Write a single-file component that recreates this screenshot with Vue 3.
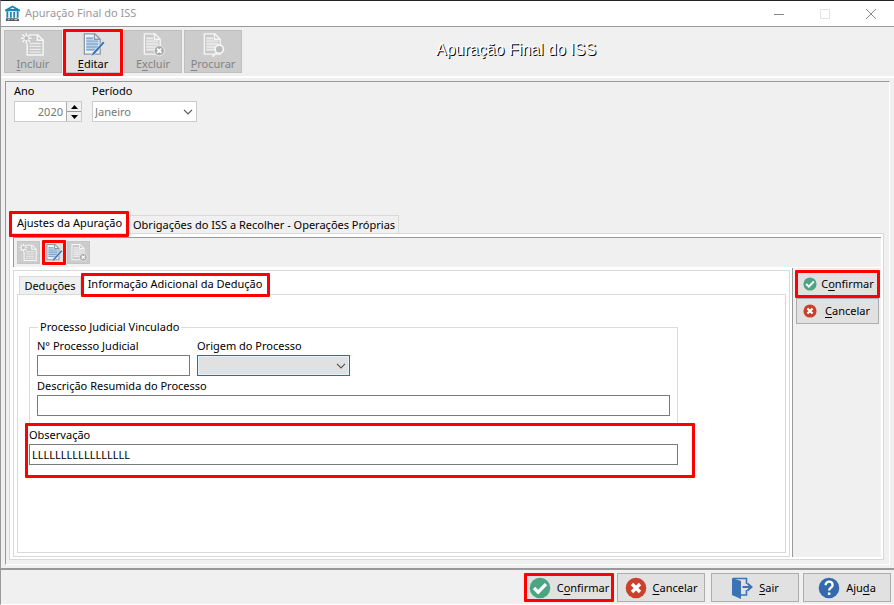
<script setup>
import { ref } from 'vue'

const tools = [
  { id: 'new', pre: '', key: 'I', post: 'ncluir', disabled: true },
  { id: 'edit', pre: '', key: 'E', post: 'ditar', disabled: false },
  { id: 'delete', pre: 'E', key: 'x', post: 'cluir', disabled: true },
  { id: 'search', pre: '', key: 'P', post: 'rocurar', disabled: true },
]
const actions = [
  { id: 'ok', pre: 'C', key: 'o', post: 'nfirmar' },
  { id: 'cancel', pre: '', key: 'C', post: 'ancelar' },
  { id: 'exit', pre: '', key: 'S', post: 'air' },
  { id: 'help', pre: 'Aju', key: 'd', post: 'a' },
]
const miniTools = [
  { id: 'new', label: 'Incluir dedução' },
  { id: 'edit', label: 'Editar dedução' },
  { id: 'delete', label: 'Excluir dedução' },
]
const year = ref(2020)
const period = ref('Janeiro')
const process = ref('')
const origin = ref('')
const summary = ref('')
const note = ref('LLLLLLLLLLLLLLLLL')
</script>

<template>
  <div class="window">
    <svg class="defs" width="0" height="0" aria-hidden="true">
      <symbol id="doc" viewBox="0 0 26 26">
        <path d="M4 2h11l5.500 5.500V23H4z" fill="var(--paper)" stroke="var(--edge)" stroke-width="1.400" />
        <path d="M6 5.500h7v3h5.500v11H6z" fill="var(--block)" />
        <path d="M14.500 1.500V7.500h6" fill="none" stroke="var(--edge)" stroke-width="1.400" />
        <path d="M6 6.500h7M6 9.500h12.500M6 12.500h12.500M6 15.500h12.500M6 18.500h12.500" stroke="var(--line)" stroke-width="1.500" />
      </symbol>
      <symbol id="i-new" viewBox="0 0 26 26">
        <path d="M10 3h8l5.500 5.500V24H7V12" fill="var(--paper)" stroke="var(--edge)" stroke-width="1.500" />
        <path d="M17.500 3v5.500h6" fill="none" stroke="var(--edge)" stroke-width="1.500" />
        <path d="M9.500 12h11.500M9.500 15h11.500M9.500 18h11.500M9.500 21h11.500" stroke="var(--line)" stroke-width="1.400" />
        <path d="M6 1v11M.5 6.500h11M2 2.500l8 8M10 2.500l-8 8" stroke="var(--edge)" stroke-width="1.500" />
        <circle cx="6" cy="6.500" r="2" fill="#bbb" />
      </symbol>
      <symbol id="i-edit" viewBox="0 0 26 26">
        <use href="#doc" />
        <path d="M23.500 9.500L12.500 21.500l-2 4 3.800-1.800L25.500 11.200z" fill="#3a74b5" stroke="#eaf1f8" stroke-width=".7" />
      </symbol>
      <symbol id="i-delete" viewBox="0 0 26 26">
        <use href="#doc" />
        <circle cx="19.500" cy="19.500" r="5.300" fill="#aaa" stroke="#efefef" />
        <path d="M17.300 17.300l4.400 4.400M21.700 17.300l-4.400 4.400" stroke="#fff" stroke-width="1.800" />
      </symbol>
      <symbol id="i-search" viewBox="0 0 26 26">
        <use href="#doc" />
        <path d="M16.500 21.500l-4 4" stroke="#eee" stroke-width="2.500" />
        <circle cx="19.500" cy="18" r="4.300" fill="#bbb" stroke="#f5f5f5" stroke-width="1.800" />
      </symbol>
      <symbol id="i-ok" viewBox="0 0 22 22">
        <circle cx="11" cy="11" r="10.300" fill="#4ba583" />
        <path d="M5 11l4.200 4.200L17 7.200" fill="none" stroke="#fff" stroke-width="3.200" />
      </symbol>
      <symbol id="i-cancel" viewBox="0 0 22 22">
        <circle cx="11" cy="11" r="10.300" fill="#ca412b" />
        <path d="M7 7l8 8M15 7l-8 8" stroke="#fff" stroke-width="3.400" />
      </symbol>
      <symbol id="i-exit" viewBox="0 0 22 22">
        <path d="M1 1l9 3v18l-9-4z" fill="#3a74b5" />
        <path d="M2 1.500h13.500V7M15.500 13v5H10" fill="none" stroke="#3a74b5" stroke-width="1.600" />
        <path d="M11.500 10h8M16.500 6.500L20.500 10l-4 3.500" fill="none" stroke="#3a74b5" stroke-width="2" />
      </symbol>
      <symbol id="i-help" viewBox="0 0 22 22">
        <circle cx="11" cy="11" r="10.300" fill="#3569ad" />
        <path d="M7.600 8.200c0-4.700 7-4.600 7 0 0 2.400-3.500 2.500-3.500 5.300" fill="none" stroke="#fff" stroke-width="2.300" />
        <path d="M9.900 15.500h2.500v2.400H9.900z" fill="#fff" />
      </symbol>
    </svg>

    <header class="titlebar">
      <svg class="app-icon" viewBox="0 0 16 17" aria-hidden="true">
        <path d="M8 0L0 4.500V6h16V4.500z" fill="#1788ba" />
        <path d="M5.500 3.800L8 2l2.500 1.800z" fill="#fff" />
        <path d="M2.500 6v7M6.200 7v6M9.800 7v6M13.500 6v7" stroke="#1788ba" stroke-width="2" />
        <path d="M1 13.500h12l2 1v2H1z" fill="#55595d" />
        <path d="M3 15h2M7 15h1M10 15h3" stroke="#ddd" />
      </svg>
      <span class="caption">Apuração Final do ISS</span>
      <div class="window-controls">
        <button type="button" aria-label="Minimizar"><svg viewBox="0 0 12 12"><path d="M1 6.500h10" stroke="#888" /></svg></button>
        <button type="button" aria-label="Maximizar" disabled><svg viewBox="0 0 12 12"><path d="M1.500 1.500h9v9h-9z" fill="none" stroke="#e2e2e2" /></svg></button>
        <button type="button" aria-label="Fechar"><svg viewBox="0 0 12 12"><path d="M1 1l10 10M11 1L1 11" stroke="#888" /></svg></button>
      </div>
    </header>

    <div class="toolbar">
      <div class="tools">
        <button v-for="t in tools" :key="t.id" type="button" class="tool" :class="{ marked: !t.disabled }" :disabled="t.disabled">
          <svg aria-hidden="true"><use :href="'#i-' + t.id" /></svg>
          <span>{{ t.pre }}<u>{{ t.key }}</u>{{ t.post }}</span>
        </button>
      </div>
      <h1>Apuração Final do ISS</h1>
    </div>

    <main class="main">
      <div class="filters">
        <div class="field year">
          <label for="year">Ano</label>
          <div class="control">
            <input id="year" v-model="year" type="text" inputmode="numeric" />
            <div class="spin">
              <button type="button" aria-label="Aumentar ano" @click="year++"><svg viewBox="0 0 7 4"><path d="M0 4l3.500-4L7 4z" /></svg></button>
              <button type="button" aria-label="Diminuir ano" @click="year--"><svg viewBox="0 0 7 4"><path d="M0 0l3.500 4L7 0z" /></svg></button>
            </div>
          </div>
        </div>
        <div class="field period">
          <label for="period">Período</label>
          <div class="control">
            <select id="period" v-model="period"><option>Janeiro</option><option>Fevereiro</option></select>
            <svg class="chevron" viewBox="0 0 10 6"><path d="M1 .8l4 4 4-4" /></svg>
          </div>
        </div>
      </div>

      <div class="tabs outer" role="tablist">
        <button type="button" role="tab" class="tab active marked" aria-selected="true">Ajustes da Apuração</button>
        <button type="button" role="tab" class="tab" aria-selected="false">Obrigações do ISS a Recolher - Operações Próprias</button>
      </div>
      <section class="page">
        <div class="minibar">
          <button v-for="t in miniTools" :key="t.id" type="button" class="mini" :class="{ marked: t.id === 'edit' }" :disabled="t.id !== 'edit'" :aria-label="t.label">
            <svg aria-hidden="true"><use :href="'#i-' + t.id" /></svg>
          </button>
        </div>
        <div class="split">
          <div class="detail">
            <div class="tabs inner" role="tablist">
              <button type="button" role="tab" class="tab" aria-selected="false">Deduções</button>
              <button type="button" role="tab" class="tab active marked" aria-selected="true">Informação Adicional da Dedução</button>
            </div>
            <div class="form-page">
              <fieldset>
                <legend>Processo Judicial Vinculado</legend>
                <div class="pair">
                  <div class="field">
                    <label for="process">N° Processo Judicial</label>
                    <div class="control"><input id="process" v-model="process" type="text" /></div>
                  </div>
                  <div class="field origin">
                    <label for="origin">Origem do Processo</label>
                    <div class="control">
                      <select id="origin" v-model="origin"><option value=""></option></select>
                      <svg class="chevron" viewBox="0 0 10 6"><path d="M1 .8l4 4 4-4" /></svg>
                    </div>
                  </div>
                </div>
                <div class="field">
                  <label for="summary">Descrição Resumida do Processo</label>
                  <div class="control"><input id="summary" v-model="summary" type="text" /></div>
                </div>
              </fieldset>
              <div class="note marked">
                <div class="field">
                  <label for="note">Observação</label>
                  <div class="control"><input id="note" v-model="note" type="text" /></div>
                </div>
              </div>
            </div>
          </div>
          <aside>
            <button v-for="a in actions.slice(0, 2)" :key="a.id" type="button" class="side" :class="{ marked: a.id === 'ok' }">
              <svg aria-hidden="true"><use :href="'#i-' + a.id" /></svg>
              <span>{{ a.pre }}<u>{{ a.key }}</u>{{ a.post }}</span>
            </button>
          </aside>
        </div>
      </section>
    </main>

    <footer>
      <button v-for="a in actions" :key="a.id" type="button" class="action" :class="[a.id, { marked: a.id === 'ok' }]">
        <svg aria-hidden="true"><use :href="'#i-' + a.id" /></svg>
        <span>{{ a.pre }}<u>{{ a.key }}</u>{{ a.post }}</span>
      </button>
    </footer>
  </div>
</template>

<style>
body { margin: 0; background: #f0f0f0; }
</style>

<style scoped>
* { box-sizing: border-box; }
.window {
  --paper: #c9c9c9;
  --block: #d6d6d6;
  --edge: #f6f6f6;
  --line: #ececec;
  display: flex;
  flex-direction: column;
  min-height: 100vh;
  border-left: 1px solid #999;
  border-top: 1px solid #222;
  border-bottom: 1px solid #fff;
  background: #f0f0f0;
  color: #000;
  font: 11px/14px "Noto Sans", "Open Sans", sans-serif;
}
.defs { position: absolute; }
button, input, select { font: inherit; color: inherit; margin: 0; padding: 0; border-radius: 0; }
button { border: 0; background: none; white-space: nowrap; }
u { text-underline-offset: 2px; text-decoration-skip-ink: none; }
.marked { position: relative; }
.marked::after {
  content: "";
  position: absolute;
  inset: -2px;
  border: 3px solid #f00;
  border-radius: 1px;
  pointer-events: none;
}

.titlebar {
  display: flex;
  align-items: center;
  height: 26px;
  padding-left: 4px;
  border-bottom: 1px solid #999;
  background: #fff;
  color: #999;
}
.app-icon { width: 15px; height: 17px; }
.caption { flex: 1; margin-left: 5px; padding-bottom: 2px; }
.window-controls { display: flex; }
.window-controls button { display: grid; place-items: center; width: 46px; height: 24px; }
.window-controls svg { width: 12px; height: 12px; }

.toolbar {
  display: flex;
  height: 51px;
  padding: 3px 0 0 3px;
  border-bottom: 2px solid #fff;
}
.tools { display: flex; gap: 2px; }
.tool {
  display: flex;
  flex-direction: column;
  align-items: center;
  width: 58px;
  height: 43px;
  padding-top: 1px;
  border: 1px solid #bfbfbf;
  background: #ccc;
  color: #838383;
}
.tool svg { width: 26px; height: 25px; }
.tool.marked::after { bottom: -4px; }
.tool:not(:disabled), .mini:not(:disabled) {
  --paper: #eef3f7;
  --block: #bdd2e8;
  --edge: #8d9aa6;
  --line: #86abd2;
  background: #e1e1e1;
  color: #000;
}
h1 {
  flex: 1;
  margin: 10px 104px 0 0;
  font: 16px/20px "Liberation Sans", sans-serif;
  text-align: center;
  color: #fff;
  text-shadow: 1px 1px #000;
}

.main {
  display: flex;
  flex: 1;
  flex-direction: column;
  margin: 3px 4px;
  padding: 2px 5px 4px 3px;
  border: 1px solid #fff;
  border-top-color: #999;
  border-left-color: #999;
}
.filters { display: flex; gap: 10px; padding: 0 0 0 5px; min-height: 128px; }
.field { display: flex; flex-direction: column; gap: 3px; }
.control { position: relative; display: flex; }
.control input, .control select {
  width: 100%;
  height: 21px;
  padding: 0 2px;
  border: 1px solid #7a7a7a;
  outline: 0;
  background: #fff;
  appearance: none;
}
.chevron { position: absolute; right: 4px; top: 8px; width: 10px; height: 6px; fill: none; stroke: #555; stroke-width: 1.2; pointer-events: none; }
.year { width: 68px; }
.period { width: 105px; }
.filters input, .filters select { border-color: #ccc; color: #777; }
.filters .year input { padding-right: 18px; text-align: right; }
.spin { position: absolute; right: 1px; top: 1px; display: grid; gap: 1px; width: 15px; height: 19px; border-left: 1px solid #aaa; background: #999; }
.spin button { display: grid; place-items: center; background: #f0f0f0; }
.spin svg { width: 7px; height: 4px; }

.tabs { display: flex; align-items: flex-end; }
.tab { height: 18px; padding: 0 4px; border: 1px solid #d9d9d9; border-bottom: 0; background: #f0f0f0; }
.tab.active { z-index: 1; background: #fff; }
.outer .active { width: 119px; height: 21px; margin-left: 1px; }
.outer .active::after { right: -1px; bottom: -4px; }
.outer .active + .tab { padding: 0 3px; }
.page {
  display: flex;
  flex: 1;
  flex-direction: column;
  padding: 3px 2px 2px 3px;
  border: 1px solid #d9d9d9;
  background: #fff;
}
.minibar { display: flex; gap: 2px; height: 30px; padding: 3px; border-top: 1px solid #999; border-left: 1px solid #999; background: #f0f0f0; }
.mini { display: grid; place-items: center; width: 23px; height: 23px; border: 1px solid #c5c5c5; background: #ccc; }
.mini svg { width: 19px; height: 19px; }
.mini.marked::after { inset: -2px -2px -2px -1px; }
.split { display: flex; flex: 1; padding-top: 1px; }
.detail {
  display: flex;
  flex: 1;
  flex-direction: column;
  min-width: 0;
  margin: 2px 2px 0 0;
  padding: 2px 3px 3px;
  border: 1px solid #d9d9d9;
}
.inner { padding-left: 2px; }
.inner .tab { width: 62px; }
.inner .active { width: 188px; height: 21px; }
.inner .active::after { inset: -1px -2px -3px -1px; }
.form-page { flex: 1; padding: 25px 11px 11px; border: 1px solid #d9d9d9; }
fieldset {
  width: 100%;
  max-width: 649px;
  height: 105px;
  margin: 0;
  padding: 5px 7px 0;
  border: 1px solid #dcdcdc;
}
legend { margin-left: 1px; padding: 0 2px; }
.pair { display: grid; grid-template-columns: 153px 153px; gap: 7px; margin-bottom: 3px; }
fieldset .field, .note .field { gap: 2px; }
.origin select { border-color: #0078d7; background: #e1e1e1; box-shadow: inset 0 0 0 1px #e5f1fb; }
.note { max-width: 666px; height: 51px; margin: 0 0 0 -2px; padding: 3px 15px 0 2px; }

aside { width: 89px; padding: 3px 2px 0 3px; border-left: 1px solid #999; background: #f0f0f0; }
.side { display: flex; align-items: center; width: 100%; height: 26px; padding-left: 6px; border: 1px solid #adadad; background: #e1e1e1; }
.side + .side { margin-top: 1px; }
.side svg { width: 14px; height: 14px; }
.side span { flex: 1; text-align: center; }

footer { display: flex; justify-content: flex-end; gap: 4px; padding: 3px 3px 2px; border-top: 2px solid #999; }
.action { display: flex; align-items: center; justify-content: center; gap: 6px; width: 88px; height: 29px; border: 1px solid #adadad; background: #e1e1e1; }
.action.ok::after { inset: -1px -2px -1px -2px; }
.action.cancel { margin-right: 2px; }
.action svg { width: 22px; height: 22px; }
</style>
